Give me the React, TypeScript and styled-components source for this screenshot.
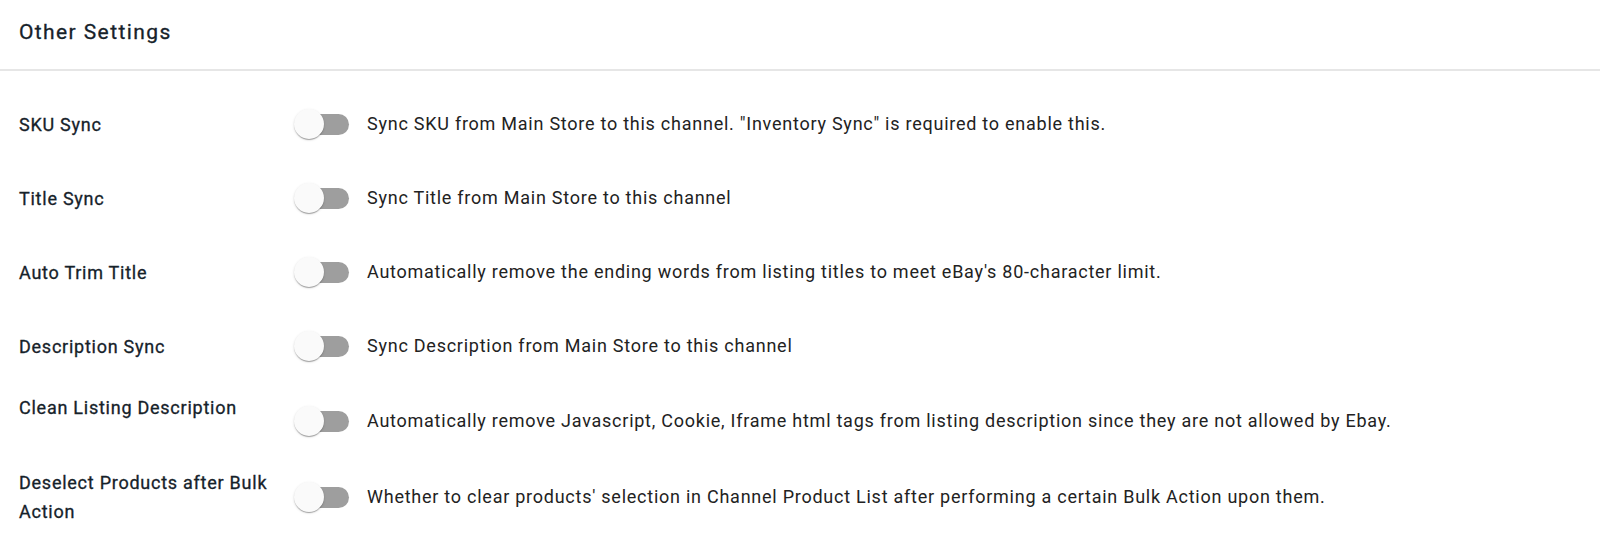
import React from 'react';
import styled, {createGlobalStyle} from 'styled-components';

const GlobalStyle = createGlobalStyle`
  * { box-sizing: border-box; }
  body {
    margin: 0;
    background: #ffffff;
    font-family: Roboto, "Liberation Sans", sans-serif;
  }
`

type Setting = {
    label: string
    text: string
    raised?: boolean
}

const settings: Setting[] = [
    {label: 'SKU Sync', text: 'Sync SKU from Main Store to this channel. "Inventory Sync" is required to enable this.'},
    {label: 'Title Sync', text: 'Sync Title from Main Store to this channel'},
    {label: 'Auto Trim Title', text: "Automatically remove the ending words from listing titles to meet eBay's 80-character limit."},
    {label: 'Description Sync', text: 'Sync Description from Main Store to this channel'},
    {label: 'Clean Listing Description', text: 'Automatically remove Javascript, Cookie, Iframe html tags from listing description since they are not allowed by Ebay.', raised: true},
    {label: 'Deselect Products after Bulk Action', text: "Whether to clear products' selection in Channel Product List after performing a certain Bulk Action upon them."},
]

const Switch = ({checked = false}: {checked?: boolean}) => (
    <SwitchRoot>
        <Track $checked={checked}/>
        <Thumb $checked={checked}/>
    </SwitchRoot>
)

const App = () => {
    return (
        <Card>
            <GlobalStyle/>
            <Header>
                <Title>Other Settings</Title>
            </Header>
            <Body>
                {settings.map((s) => (
                    <Row key={s.label}>
                        <Label $raised={s.raised}>{s.label}</Label>
                        <Control>
                            <Switch/>
                            <Description>{s.text}</Description>
                        </Control>
                    </Row>
                ))}
            </Body>
        </Card>
    );
};

const Card = styled.div`
  width: 100%;
  min-height: 552px;
  background: #fff;
`

const Header = styled.div`
  height: 71px;
  padding: 0 19px 6px;
  display: flex;
  align-items: center;
  border-bottom: 2px solid #e6e6e6;
`

const Title = styled.h2`
  margin: 0;
  font-size: 21px;
  font-weight: 400;
  letter-spacing: 1.4px;
  color: #16222a;
  -webkit-text-stroke: 0.3px #16222a;
`

const Body = styled.div`
  padding: 16px 19px 0;
`

const Row = styled.div`
  display: flex;
  align-items: center;
  min-height: 74px;
  padding: 10px 0;
`

const Label = styled.div<{ $raised?: boolean }>`
  width: 268px;
  flex-shrink: 0;
  font-size: 18px;
  font-weight: 400;
  letter-spacing: 0.75px;
  line-height: 29px;
  color: #16222a;
  -webkit-text-stroke: 0.3px #16222a;
  padding-right: 10px;
  margin-bottom: ${p => p.$raised ? '26px' : '0'};
`

const Control = styled.div`
  display: flex;
  align-items: center;
  gap: 18px;
`

const SwitchRoot = styled.span`
  position: relative;
  display: inline-block;
  width: 62px;
  height: 44px;
  flex-shrink: 0;
`

const Track = styled.span<{ $checked: boolean }>`
  position: absolute;
  left: 14px;
  top: 12px;
  width: 48px;
  height: 21px;
  border-radius: 11px;
  background: ${p => p.$checked ? '#1976d2' : '#9e9e9e'};
`

const Thumb = styled.span<{ $checked: boolean }>`
  position: absolute;
  top: 7px;
  left: ${p => p.$checked ? '34px' : '7px'};
  width: 30px;
  height: 30px;
  border-radius: 50%;
  background: #fafafa;
  box-shadow: 0 2px 1px -1px rgba(0, 0, 0, 0.2), 0 1px 1px 0 rgba(0, 0, 0, 0.14), 0 1px 3px 0 rgba(0, 0, 0, 0.12);
`

const Description = styled.span`
  font-size: 18px;
  font-weight: 400;
  letter-spacing: 0.75px;
  color: #222;
  line-height: 24px;
`

export default App;
